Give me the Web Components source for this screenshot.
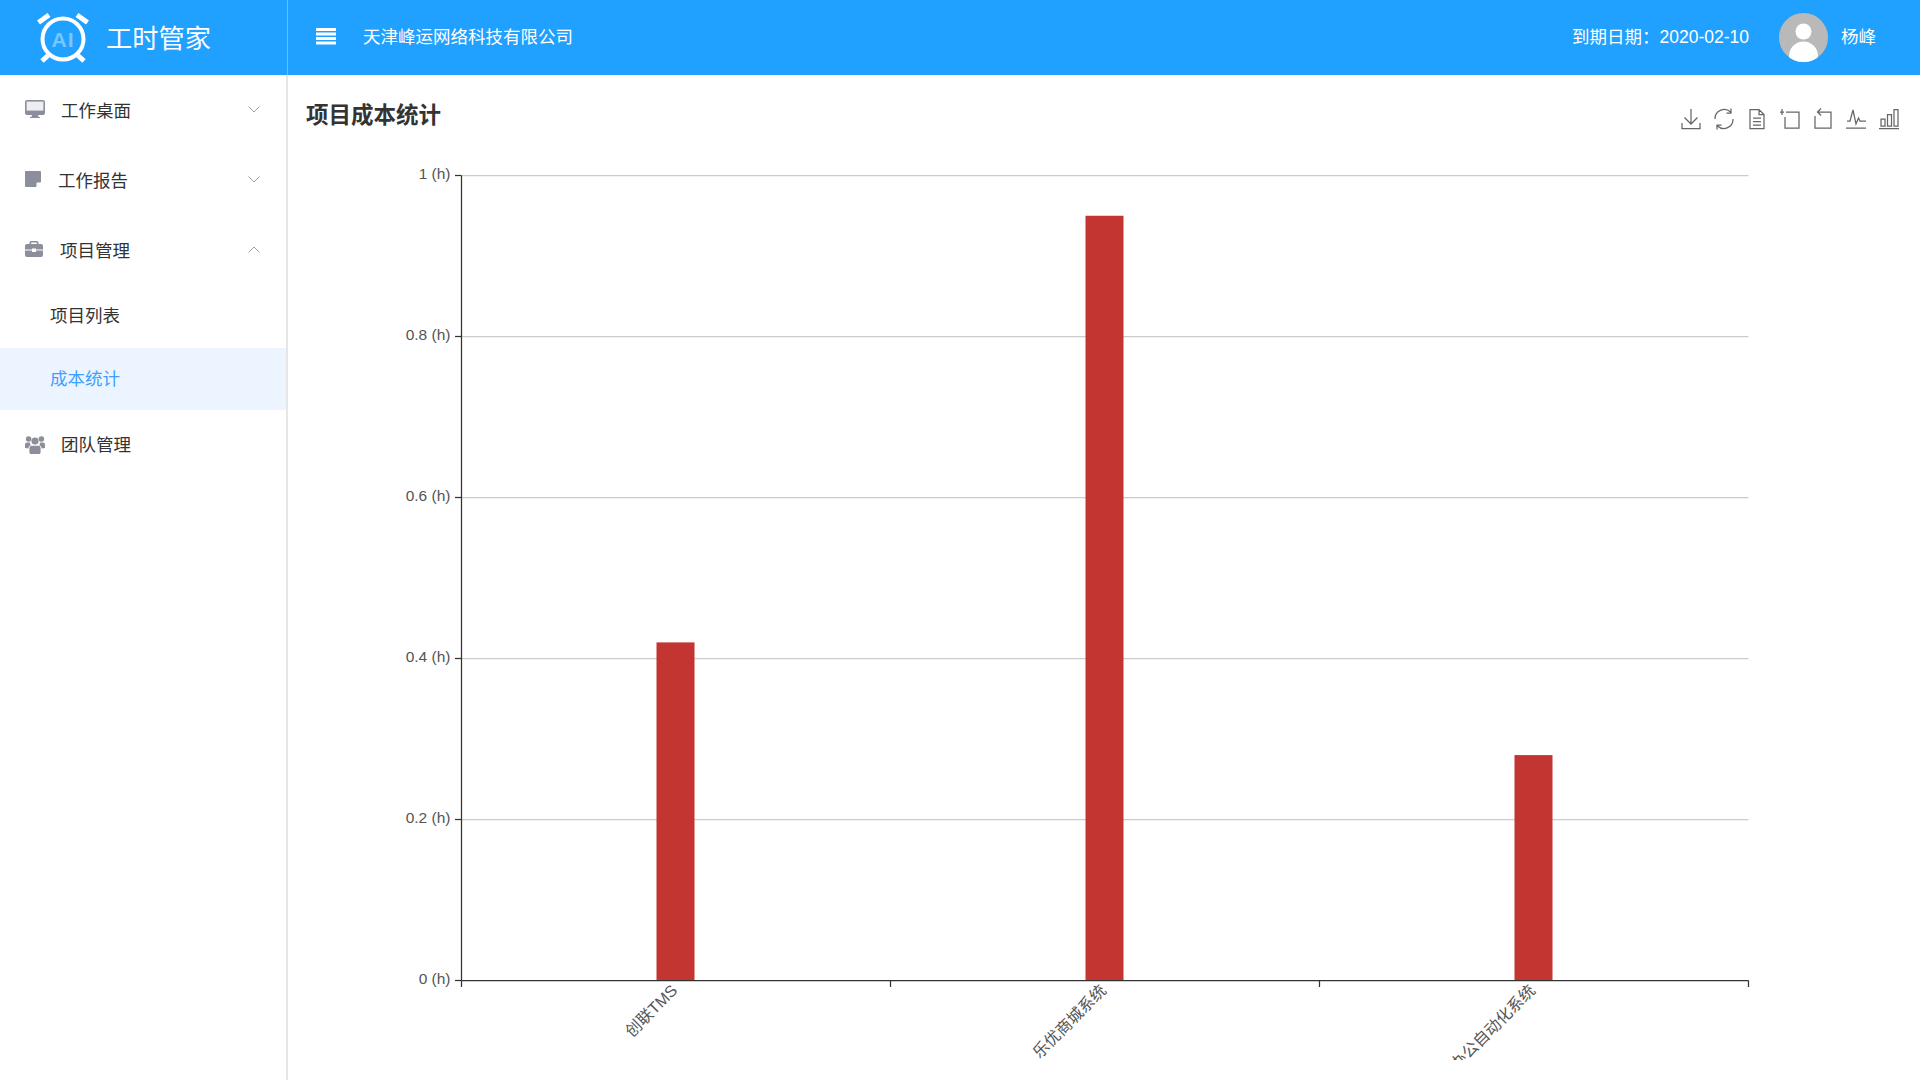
<!DOCTYPE html>
<html lang="zh">
<head>
<meta charset="utf-8">
<title>项目成本统计</title>
<style>
    html, body { margin: 0; height: 100%; overflow: hidden; }
    body { font-family: "Liberation Sans", "Noto Sans CJK SC", sans-serif; color: #333; background: #fff; }
    app-shell { height: 100vh; }
    svg[slot] { display: block; }
</style>
</head>
<body>
<app-shell>
    <app-header slot="header" company="天津峰运网络科技有限公司" expire="到期日期&#xFF1A;2020-02-10" user="杨峰"></app-header>
    <side-menu slot="side">
        <menu-item arrow="down" gap="16">
            <svg slot="icon" width="20" height="18" viewBox="0 0 20 18"><path fill="#8c8f9b" d="M2 0h16a2 2 0 0 1 2 2v11a2 2 0 0 1-2 2h-5l.6 2H15v1H5v-1h1.400l.6-2H2a2 2 0 0 1-2-2V2a2 2 0 0 1 2-2z"/><path fill="#eceef2" d="M1.600 1.600h16.800v9H1.600z"/></svg>
            工作桌面
        </menu-item>
        <menu-item arrow="down" gap="17">
            <svg slot="icon" width="16" height="16" viewBox="0 0 16 16"><path fill="#8c8f9b" d="M1 0h14a1 1 0 0 1 1 1v10l-5 5H1a1 1 0 0 1-1-1V1a1 1 0 0 1 1-1z"/><path fill="#fff" d="M16 11.500l-4.500 4.500v-3.500a1 1 0 0 1 1-1z"/></svg>
            工作报告
        </menu-item>
        <menu-item arrow="up" gap="17">
            <svg slot="icon" width="18" height="16" viewBox="0 0 18 16"><path fill="#8c8f9b" d="M6 0h6a1.500 1.500 0 0 1 1.500 1.500V3H16a2 2 0 0 1 2 2v3.500h-7V7.500H7v1H0V5a2 2 0 0 1 2-2h2.500V1.500A1.500 1.500 0 0 1 6 0zm.200 1.600V3h5.600V1.600zM0 9.500h7V11h4V9.500h7V14a2 2 0 0 1-2 2H2a2 2 0 0 1-2-2z"/></svg>
            项目管理
        </menu-item>
        <sub-item style="padding-bottom: 4px">项目列表</sub-item>
        <sub-item active>成本统计</sub-item>
        <menu-item gap="16" style="padding-bottom: 4px">
            <svg slot="icon" style="margin-top: 3px" width="20" height="18" viewBox="0 0 20 18"><g fill="#8c8f9b"><circle cx="3.600" cy="3" r="2.800"/><circle cx="16.400" cy="3" r="2.800"/><circle cx="10" cy="5" r="3.600"/><path d="M0 12V8.500a2 2 0 0 1 2-2h3a4 4 0 0 0 .8 2.700c-1.600.6-2.300 1.800-2.400 3.300zM20 12V8.500a2 2 0 0 0-2-2h-3a4 4 0 0 1-.8 2.700c1.600.6 2.300 1.800 2.400 3.300zM6.600 9.800h6.800c1.500 0 2.200 1.200 2.200 2.800v3.600c0 1-.7 1.800-2 1.800H6.400c-1.300 0-2-.8-2-1.800v-3.600c0-1.600.7-2.800 2.200-2.800z"/></g></svg>
            团队管理
        </menu-item>
    </side-menu>
    <cost-panel slot="main" heading="项目成本统计">
        <chart-tools slot="tools"></chart-tools>
        <bar-chart slot="chart"></bar-chart>
    </cost-panel>
</app-shell>

<script>
    class AppShell extends HTMLElement {
        constructor() {
            super();
            this.attachShadow({mode: "open"});
            this.shadowRoot.innerHTML = `
          <style>
            :host {
              display: grid;
              grid-template-columns: 288px 1fr;
              grid-template-rows: 75px 1fr;
            }
            .header { grid-column: 1 / 3; }
            .main { min-width: 0; overflow: hidden; }
          </style>
          <div class="header"><slot name="header"></slot></div>
          <slot name="side"></slot>
          <div class="main"><slot name="main"></slot></div>
        `;
        }
    }

    class AppHeader extends HTMLElement {
        constructor() {
            super();
            this.attachShadow({mode: "open"});
        }

        connectedCallback() {
            this.shadowRoot.innerHTML = `
          <style>
            :host {
              display: flex;
              height: 75px;
              align-items: center;
              background: #20a0ff;
              color: #fff;
              font-size: 17.500px;
            }
            .brand {
              display: flex;
              align-items: center;
              box-sizing: border-box;
              width: 288px;
              height: 100%;
              padding-left: 37px;
              border-right: 1px solid #6cc0e8;
              font-size: 26.250px;
              gap: 15px;
            }
            .brand span { padding-bottom: 2px; }
            .toggle { margin: 0 27px 0 28px; display: block; position: relative; top: -1px; }
            .company, .expire, .user { padding-bottom: 4px; }
            .company { flex: 1; }
            .expire { margin-right: 30px; }
            .avatar { display: block; margin-right: 13px; }
            .user { margin-right: 44px; }
          </style>
          <div class="brand">
            <svg width="54" height="50" viewBox="0 0 54 50" fill="none" stroke="#fff">
              <circle cx="26" cy="26" r="20.500" stroke-width="4"/>
              <path stroke-width="5" d="M1.500 9.500 12 2M40 2l10.500 7.500M5 48l6-5.500M41 42.500l6 5.500"/>
              <text x="26" y="34" text-anchor="middle" stroke="none" fill="#7cc6ff" font-family="Liberation Sans" font-weight="700" font-size="21" letter-spacing="1">AI</text>
            </svg>
            <span>工时管家</span>
          </div>
          <svg class="toggle" width="20" height="17" viewBox="0 0 20 17" fill="#fff"><path d="M0 0h20v3H0zM0 4.500h20v3H0zM0 9h20v3H0zM0 13.500h20v3H0z"/></svg>
          <span class="company">${this.getAttribute("company")}</span>
          <span class="expire">${this.getAttribute("expire")}</span>
          <svg class="avatar" width="49" height="49" viewBox="0 0 49 49">
            <clipPath id="round"><circle cx="24.500" cy="24.500" r="24.500"/></clipPath>
            <circle cx="24.500" cy="24.500" r="24.500" fill="#b9b9b9"/>
            <g clip-path="url(#round)" fill="#fff">
              <circle cx="24.500" cy="18.500" r="8"/>
              <ellipse cx="24.500" cy="43" rx="14.500" ry="14.500"/>
            </g>
          </svg>
          <span class="user">${this.getAttribute("user")}</span>
        `;
        }
    }

    class SideMenu extends HTMLElement {
        constructor() {
            super();
            this.attachShadow({mode: "open"});
            this.shadowRoot.innerHTML = `
          <style>
            :host {
              display: block;
              box-sizing: border-box;
              width: 288px;
              border-right: 2px solid #e6e6e6;
              background: #fff;
            }
          </style>
          <slot></slot>
        `;
        }
    }

    class MenuItem extends HTMLElement {
        constructor() {
            super();
            this.attachShadow({mode: "open"});
        }

        connectedCallback() {
            let arrow = this.getAttribute("arrow");
            let chevron = arrow === "up" ? "M.5 6.500 6 1l5.500 5.500" : "M.5.5 6 6 11.500.5";

            this.shadowRoot.innerHTML = `
          <style>
            :host {
              display: flex;
              align-items: center;
              box-sizing: border-box;
              height: 70px;
              padding: 0 26px 2px 25px;
              font-size: 17.500px;
              color: #333;
            }
            .icon { display: flex; margin-right: ${this.getAttribute("gap") || 17}px; }
            .text { flex: 1; }
            svg { display: block; }
          </style>
          <span class="icon"><slot name="icon"></slot></span>
          <span class="text"><slot></slot></span>
          ${arrow ? `<svg width="12" height="7" viewBox="0 0 12 7" fill="none" stroke="#9aa0a8" stroke-width="1"><path d="${chevron}"/></svg>` : ""}
        `;
        }
    }

    class SubItem extends HTMLElement {
        constructor() {
            super();
            this.attachShadow({mode: "open"});
            this.shadowRoot.innerHTML = `
          <style>
            :host {
              display: flex;
              align-items: center;
              box-sizing: border-box;
              height: 62.500px;
              padding: 0 0 2px 50px;
              font-size: 17.500px;
              color: #333;
            }
            :host([active]) {
              background: #ecf5ff;
              color: #409eff;
            }
          </style>
          <slot></slot>
        `;
        }
    }

    class CostPanel extends HTMLElement {
        constructor() {
            super();
            this.attachShadow({mode: "open"});
        }

        connectedCallback() {
            this.shadowRoot.innerHTML = `
          <style>
            :host { display: block; }
            .top {
              display: flex;
              justify-content: space-between;
              align-items: flex-start;
              height: 80px;
              padding: 0 21px 0 18px;
            }
            h1 {
              margin: 23px 0 0;
              font-size: 22.500px;
              line-height: 36px;
              font-weight: 700;
              color: #333;
            }
          </style>
          <div class="top">
            <h1>${this.getAttribute("heading")}</h1>
            <slot name="tools"></slot>
          </div>
          <slot name="chart"></slot>
        `;
        }
    }

    class ChartTools extends HTMLElement {
        constructor() {
            super();
            this.attachShadow({mode: "open"});

            // toolbox glyphs, all on a 20x22 box
            let icons = [
                "M10 1v15M3.500 9.500 10 16l6.500-6.500M1 15v5.500h18V15",
                "M16.500 4A9.200 9.200 0 0 0 1 11M3.500 18A9.200 9.200 0 0 0 19 11M17 .5V5h-4.500M3 21.500V17h4.500",
                "M3 1.500h9l5 5v14H3zM12 1.500v5h5M6 10h8M6 13.500h8M6 17h8",
                "M0 4h4M2 1v6M6 4h13v16H5V9",
                "M8 .5 4.500 4 8 7.500M4.500 4H18v16H2V8",
                "M0 20h20M1 13h3l3-11 3 14 2.500-6 1.500 3h6",
                "M0 20.500h20M2 11h4v7H2zM8.500 6.500h4V18h-4zM15 1.500h4V18h-4z"
            ];

            this.shadowRoot.innerHTML = `
          <style>
            :host {
              display: flex;
              gap: 13px;
              margin-top: 33px;
            }
            svg { display: block; }
          </style>
          ${icons.map((d) => `<svg width="20" height="22" viewBox="0 0 20 22" fill="none" stroke="#666" stroke-width="1.250"><path d="${d}"/></svg>`).join("")}
        `;
        }
    }

    class BarChart extends HTMLElement {
        constructor() {
            super();
            this.attachShadow({mode: "open"});
        }

        connectedCallback() {
            let left = 461.5, right = 1748.5, bottom = 980.5, top = 175.5;
            let plotH = bottom - top;
            let step = (right - left) / 3;
            let data = [
                {name: "创联TMS", value: 0.42},
                {name: "乐优商城系统", value: 0.95},
                {name: "办公自动化系统", value: 0.28}
            ];

            let grid = [0, 0.2, 0.4, 0.6, 0.8, 1].map((v) => {
                let y = Math.round(bottom - v * plotH - 0.5) + 0.5;
                let line = v ? `<line x1="${left}" x2="${right}" y1="${y}" y2="${y}" stroke="#ccc" stroke-width="1.250"/>` : "";
                return `${line}
                <line x1="${left - 6.5}" x2="${left}" y1="${y}" y2="${y}" stroke="#333" stroke-width="1.250"/>
                <text x="${left - 11}" y="${y}" dy="-1" text-anchor="end" dominant-baseline="middle">${v} (h)</text>`;
            }).join("");

            let bars = data.map((d, i) => {
                let cx = left + step * (i + 0.5);
                let h = d.value * plotH;
                return `<rect x="${cx - 19.5}" y="${bottom - h}" width="38" height="${h}" fill="#c23531"/>
                <text class="cat" transform="translate(${cx - 5.5} ${bottom + 3}) rotate(-45)" text-anchor="end" dominant-baseline="hanging">${d.name}</text>`;
            }).join("");

            let ticks = [0, 1, 2, 3].map((i) => {
                let x = Math.round(left + step * i - 0.5) + 0.5;
                return `<line x1="${x}" x2="${x}" y1="${bottom}" y2="${bottom + 6.5}" stroke="#333" stroke-width="1.250"/>`;
            }).join("");

            this.shadowRoot.innerHTML = `
          <style>
            :host { display: block; }
            svg {
              display: block;
              font-size: 15.500px;
              fill: #555;
            }
            .cat { font-size: 16px; }
          </style>
          <svg width="1632" height="905" viewBox="288 155 1632 905">
            ${grid}
            ${bars}
            <line x1="${left}" x2="${left}" y1="${top}" y2="${bottom}" stroke="#333" stroke-width="1.250"/>
            <line x1="${left}" x2="${right}" y1="${bottom}" y2="${bottom}" stroke="#333" stroke-width="1.250"/>
            ${ticks}
          </svg>
        `;
        }
    }

    customElements.define("app-shell", AppShell);
    customElements.define("app-header", AppHeader);
    customElements.define("side-menu", SideMenu);
    customElements.define("menu-item", MenuItem);
    customElements.define("sub-item", SubItem);
    customElements.define("cost-panel", CostPanel);
    customElements.define("chart-tools", ChartTools);
    customElements.define("bar-chart", BarChart);
</script>
</body>
</html>
